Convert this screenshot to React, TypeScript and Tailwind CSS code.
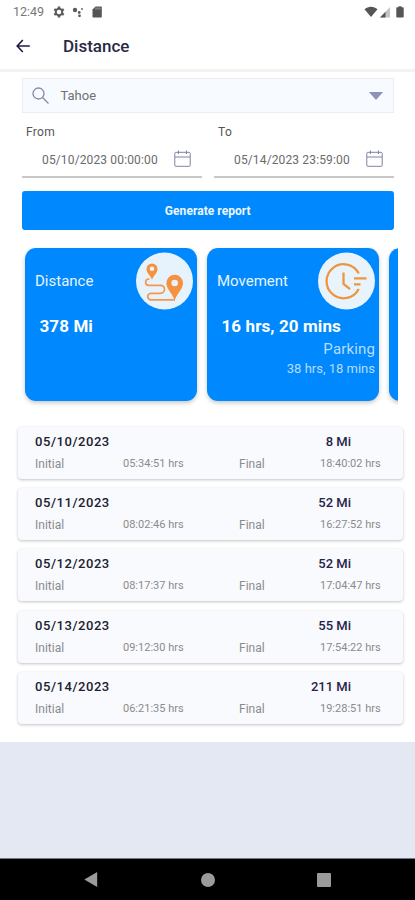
import type { ReactNode } from 'react'

interface Day {
  date: string
  distance: string
  initial: string
  final: string
}

const days: Day[] = [
  { date: '05/10/2023', distance: '8 Mi', initial: '05:34:51 hrs', final: '18:40:02 hrs' },
  { date: '05/11/2023', distance: '52 Mi', initial: '08:02:46 hrs', final: '16:27:52 hrs' },
  { date: '05/12/2023', distance: '52 Mi', initial: '08:17:37 hrs', final: '17:04:47 hrs' },
  { date: '05/13/2023', distance: '55 Mi', initial: '09:12:30 hrs', final: '17:54:22 hrs' },
  { date: '05/14/2023', distance: '211 Mi', initial: '06:21:35 hrs', final: '19:28:51 hrs' },
]

function StatusBar() {
  return (
    <div className="flex h-[23px] items-center pl-[13px] pr-[11px] text-[#5c5c5c]">
      <span className="w-[31px] text-[12.5px] leading-[23px] whitespace-nowrap text-[#777]">12:49</span>
      <svg className="ml-[9px] h-3 w-3" viewBox="0 0 24 24" fill="none" stroke="currentColor">
        <circle cx="12" cy="12" r="6.5" strokeWidth="4" />
        <path strokeWidth="5" d="M12 1v5M12 18v5M2.5 6.500l4.300 2.500M17.200 15l4.300 2.500M2.500 17.500L6.800 15M17.200 9l4.300-2.500" />
      </svg>
      <svg className="ml-[7px] h-3 w-3" viewBox="0 0 12 12" fill="currentColor">
        <circle cx="3" cy="4" r="2.200" />
        <circle cx="7.200" cy="6.500" r="1.400" />
        <circle cx="10" cy="3" r="0.900" />
        <circle cx="7.500" cy="9.800" r="1.400" />
      </svg>
      <svg className="ml-[8px] h-3 w-[10px]" viewBox="0 0 10 12">
        <path fill="#555" d="M3.500.500H9a.8.8 0 0 1 .8.800v9.400a.8.8 0 0 1-.8.800H1.300a.8.8 0 0 1-.8-.8V3.500z" />
        <path stroke="#bbb" strokeWidth=".8" d="M4 1.500v2M6 1.500v2M8 1.500v2" />
      </svg>
      <svg className="ml-auto h-3 w-[14px]" viewBox="0 0 14 12">
        <path fill="#555" d="M.5 3.200C4 -.2 10 -.2 13.500 3.200L7 11z" />
      </svg>
      <svg className="ml-[2px] h-3 w-[10px]" viewBox="0 0 10 12">
        <path fill="#c4c4c4" d="M10 1v10.500H0z" />
        <path fill="#555" d="M5.500 5.800v5.700H0z" />
      </svg>
      <svg className="ml-[6px] h-3 w-[8px]" viewBox="0 0 8 12">
        <path fill="#555" d="M2.500.200h3v1H7a.7.7 0 0 1 .7.700v8.900a.7.7 0 0 1-.7.700H1a.7.7 0 0 1-.7-.7V1.900a.7.7 0 0 1 .7-.7h1.500z" />
      </svg>
    </div>
  )
}

function Header() {
  return (
    <div className="flex h-[49px] items-center border-b-[3px] border-[#f2f2f3] pl-4">
      <svg className="mb-px h-[14px] w-[14px]" viewBox="0 0 14 14" fill="none" stroke="#1d1b45" strokeWidth="1.600">
        <path d="M13.800 7H1.200M6.800 1L1.200 7l5.600 6" />
      </svg>
      <h1 className="mt-px ml-[33px] text-[17px] font-medium text-[#2a2844]">Distance</h1>
    </div>
  )
}

function DateField({ label, value }: { label: string; value: string }) {
  return (
    <div className="w-[180px]">
      <div className="pl-[4px] text-[12px] leading-[16px] tracking-[0.3px] text-[#555]">{label}</div>
      <div className="mt-[9px] flex h-[29px] items-start border-b-2 border-[#c8c8ca] pl-[20px]">
        <span className="w-[132px] text-[12px] leading-[22px] whitespace-nowrap tracking-[0.14px] text-[#6a6a6a]">{value}</span>
        <svg className="mt-px h-[17px] w-[17px]" viewBox="0 0 17 17" fill="none" stroke="#7f82a3">
          <rect x=".8" y="2.300" width="15.400" height="14" rx="1" />
          <path d="M.8 7h15.400M4.500.5v3.500M12.500.5v3.500" />
        </svg>
      </div>
    </div>
  )
}

function RouteIcon() {
  return (
    <svg className="h-[58px] w-[58px]" viewBox="0 0 58 58">
      <circle cx="29.500" cy="29" r="28.500" fill="#e6f3fd" />
      <path
        fill="none"
        stroke="#f6964d"
        strokeWidth="1.700"
        d="M14.500 27h-1.200a3.200 3.200 0 0 0 0 6.300H25.500a4 4 0 0 1 0 8H16a3.300 3.300 0 0 0 0 6.600H40"
      />
      <path fill="#f6913f" fillRule="evenodd" d="M17 11.500a5.500 5.500 0 0 0-5.500 5.500c0 4 3.500 6 5.500 10.500 2-4.500 5.500-6.500 5.500-10.500a5.500 5.500 0 0 0-5.500-5.500zm0 3a2.300 2.300 0 1 1 0 4.600 2.300 2.300 0 0 1 0-4.600z" />
      <path fill="#f6913f" fillRule="evenodd" d="M39.700 22.700a8.300 8.300 0 0 0-8.300 8.300c0 6.200 5.300 9.200 8.300 17.200 3-8 8.300-11 8.300-17.200a8.300 8.300 0 0 0-8.300-8.300zm0 5a3.300 3.300 0 1 1 0 6.600 3.300 3.300 0 0 1 0-6.600z" />
    </svg>
  )
}

function ClockIcon() {
  return (
    <svg className="h-[58px] w-[58px]" viewBox="0 0 58 58">
      <circle cx="29.500" cy="29" r="28.500" fill="#e8f3fb" />
      <g fill="none" stroke="#ee963f" strokeWidth="2.300">
        <path d="M41.700 21.500A17 17 0 1 0 41.700 37" />
        <path d="M26.500 20.500v11.500l6.500 5.200M37 26.300h12.500M37 32.300h6.500" />
      </g>
    </svg>
  )
}

interface CardProps {
  title: string
  value: string
  icon: ReactNode
  children?: ReactNode
}

function Card({ title, value, icon, children }: CardProps) {
  return (
    <div className="h-[153px] w-[172px] shrink-0 rounded-[11px] bg-[#0088fe] pt-1 pr-[4px] pl-[10px] text-white shadow-[0_2px_4px_rgba(0,0,0,0.22)]">
      <div className="flex h-[58px] items-center justify-between">
        <span className="text-[15px] whitespace-nowrap text-[#e6f3ff]">{title}</span>
        {icon}
      </div>
      <div className="mt-[5px] pl-[4.500px] text-[17px] leading-[22px] font-bold tracking-[0.1px] whitespace-nowrap">{value}</div>
      {children}
    </div>
  )
}

function DayRow({ day }: { day: Day }) {
  return (
    <div className="h-[52px] rounded-[4px] bg-[#f8fafd] px-[17px] pt-[6px] shadow-[0_1px_3px_rgba(0,0,0,0.24)]">
      <div className="flex justify-between pr-[35px] text-[13px] leading-[18px] font-medium text-[#202030]">
        <span className="tracking-[0.55px]">{day.date}</span>
        <span className="text-[#25244a]">{day.distance}</span>
      </div>
      <div className="mt-[4px] flex text-[11px] leading-[18px] whitespace-nowrap text-[#8b8b8f]">
        <span className="w-[88px] text-[12px]">Initial</span>
        <span className="w-[116px]">{day.initial}</span>
        <span className="w-[81px] text-[12px]">Final</span>
        <span>{day.final}</span>
      </div>
    </div>
  )
}

export default function App() {
  return (
    <div className="flex h-[900px] w-[415px] flex-col overflow-hidden bg-[#e3e8f3] font-['Roboto',sans-serif]">
      <div className="h-[742px] bg-white">
        <StatusBar />
        <Header />
        <div className="mx-[21.500px] mt-[6px] flex h-[35px] w-[372.500px] items-center border border-[#e9edf2] bg-[#f7fafe] pr-[10px] pl-[9px]">
          <svg className="h-[17px] w-[17px]" viewBox="0 0 17 17" fill="none" stroke="#8588a8" strokeWidth="1.300">
            <circle cx="6.500" cy="6.500" r="5.500" />
            <path d="M10.500 10.500l6 6" />
          </svg>
          <span className="mt-px ml-[12px] text-[13px] text-[#707078]">Tahoe</span>
          <svg className="ml-auto h-2 w-[14px]" viewBox="0 0 14 8">
            <path fill="#8e91b8" d="M0 0h14L7 8z" />
          </svg>
        </div>
        <div className="mx-[22px] mt-[11px] flex w-[372px] justify-between">
          <DateField label="From" value="05/10/2023 00:00:00" />
          <DateField label="To" value="05/14/2023 23:59:00" />
        </div>
        <button className="mx-[21.500px] mt-[13px] block h-[39px] w-[372.500px] rounded-[3px] bg-[#0088fe] pt-px text-[12px] font-bold tracking-[0.05px] text-[#eef7ff]">
          Generate report
        </button>
        <div className="ml-[15px] flex h-[177px] w-[383px] gap-[10px] overflow-hidden pt-[18px] pl-[10px]">
          <Card title="Distance" value="378 Mi" icon={<RouteIcon />} />
          <Card title="Movement" value="16 hrs, 20 mins" icon={<ClockIcon />}>
            <div className="text-right text-[#b5dcff]">
              <div className="mt-px text-[15px] leading-[22px] tracking-[0.15px]">Parking</div>
              <div className="text-[13px] leading-[17px]">38 hrs, 18 mins</div>
            </div>
          </Card>
          <Card title="" value="" icon={null} />
        </div>
        <div className="mr-3 ml-[18px] mt-[20px] flex flex-col gap-[9.200px]">
          {days.map((day) => (
            <DayRow key={day.date} day={day} />
          ))}
        </div>
      </div>
      <div className="mt-auto flex h-[42px] items-center border-t border-[#77787f] bg-black text-[#9b9b9b]">
        <svg className="ml-[84px] h-[15px] w-[14px]" viewBox="0 0 14 15" fill="currentColor">
          <path d="M13.200 0v15L.3 7.500z" />
        </svg>
        <div className="ml-[103px] h-[14px] w-[14px] rounded-full bg-[#9b9b9b]" />
        <div className="ml-[102px] h-[14px] w-[14px] rounded-[1px] bg-[#9b9b9b]" />
      </div>
    </div>
  )
}
